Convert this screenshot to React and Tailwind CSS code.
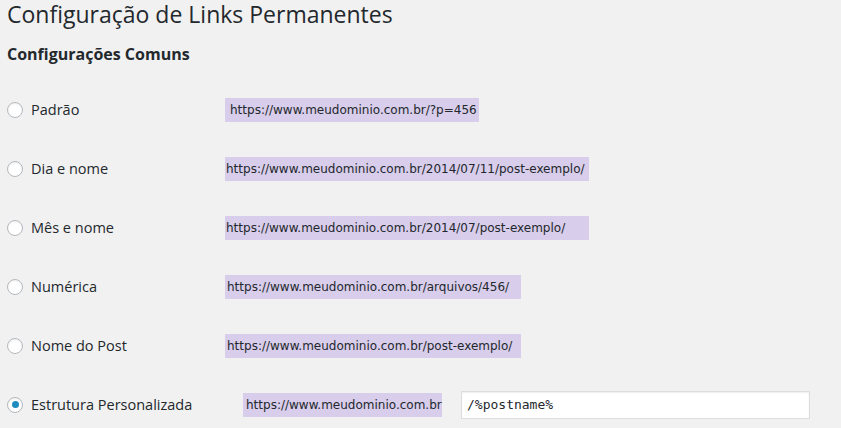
import React from "react";

const rows = [
  { label: "Padrão", url: "https://www.meudominio.com.br/?p=456", box: "w-[254px] pl-[5px]" },
  { label: "Dia e nome", url: "https://www.meudominio.com.br/2014/07/11/post-exemplo/", box: "w-[364px] pl-[1px]" },
  { label: "Mês e nome", url: "https://www.meudominio.com.br/2014/07/post-exemplo/", box: "w-[364px] pl-[1px]" },
  { label: "Numérica", url: "https://www.meudominio.com.br/arquivos/456/", box: "w-[296px] pl-[2px]" },
  { label: "Nome do Post", url: "https://www.meudominio.com.br/post-exemplo/", box: "w-[296px] pl-[2px]" },
];

function Radio({ checked }) {
  return (
    <span className="flex h-4 w-4 shrink-0 items-center justify-center rounded-full border border-[#b4b9be] bg-white shadow-[inset_0_1px_2px_rgba(0,0,0,0.07)]">
      {checked ? <span className="h-[7px] w-[7px] rounded-full bg-[#1e8cbe]" /> : null}
    </span>
  );
}

export default function App() {
  return (
    <div className="h-[428px] w-[841px] overflow-hidden bg-[#f1f1f1] text-[#23282d] font-['Open_Sans',sans-serif]">
      <h1 className="pl-[7px] text-[23px] leading-[29px] font-normal whitespace-nowrap">Configuração de Links Permanentes</h1>
      <h2 className="mt-[13px] pl-[7px] text-[16px] leading-[24px] font-bold whitespace-nowrap">Configurações Comuns</h2>

      <div className="mt-[14px] flex flex-col">
        {rows.map((r) => (
          <div key={r.label} className="flex h-[59px] items-center">
            <div className="flex w-[225px] items-center gap-[8px] pl-[7px]">
              <Radio />
              <span className="text-[14.5px] whitespace-nowrap">{r.label}</span>
            </div>
            <span
              className={`${r.box} flex h-[24px] items-center whitespace-nowrap bg-[#d8cdea] text-[12px] text-[#23282d] font-['DejaVu_Sans',sans-serif]`}
            >
              {r.url}
            </span>
          </div>
        ))}
        <div className="flex h-[59px] items-center">
          <div className="flex w-[243px] items-center gap-[8px] pl-[7px]">
            <Radio checked />
            <span className="text-[14.5px] whitespace-nowrap">Estrutura Personalizada</span>
          </div>
          <span className="flex h-[24px] w-[199px] items-center whitespace-nowrap bg-[#d8cdea] pl-[3px] text-[12px] font-['DejaVu_Sans',sans-serif]">
            https://www.meudominio.com.br
          </span>
          <input
            readOnly
            value="/%postname%"
            className="ml-[19px] h-[28px] w-[349px] border border-[#dddddd] bg-white px-[5px] text-[13px] text-[#23282d] shadow-[inset_0_1px_2px_rgba(0,0,0,0.07)] outline-none font-['DejaVu_Sans_Mono',monospace]"
          />
        </div>
      </div>
    </div>
  );
}
